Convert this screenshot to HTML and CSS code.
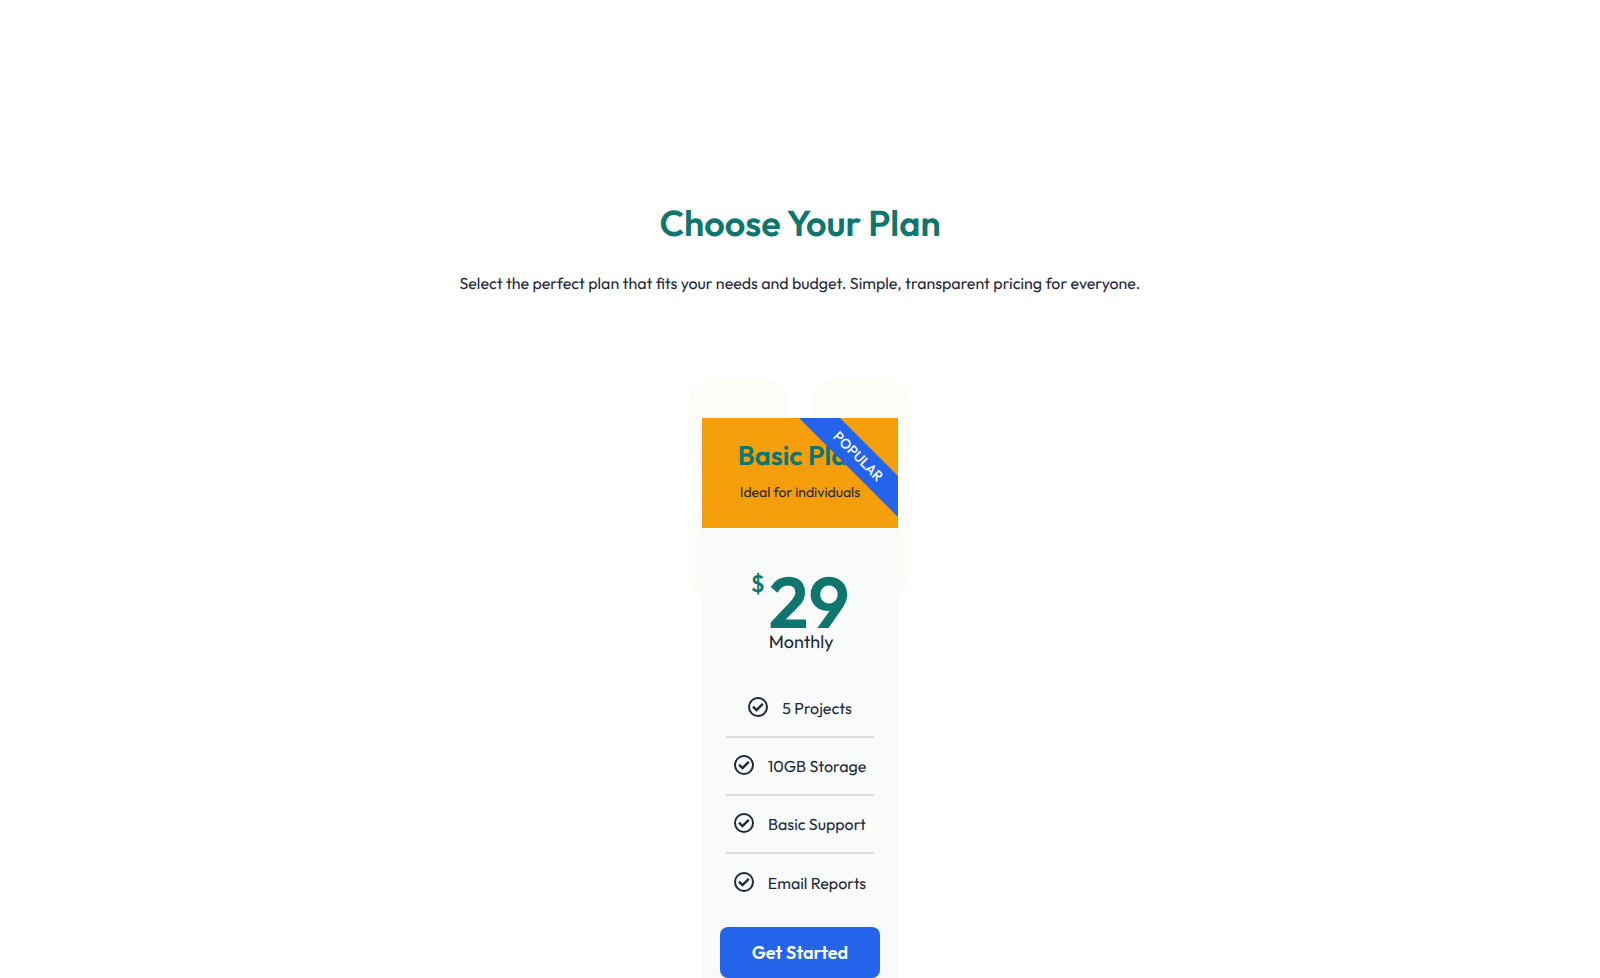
FILE: index.html
```html
<!DOCTYPE html>
<html lang="en">
<head>
<meta charset="utf-8">
<meta name="viewport" content="width=device-width, initial-scale=1">
<title>Choose Your Plan</title>
<link rel="stylesheet" href="styles.css">
</head>
<body>
<svg class="sprite" aria-hidden="true">
  <symbol id="check" viewBox="0 0 20 20">
    <circle cx="10" cy="10" r="9" fill="none" stroke="currentColor" stroke-width="2"/>
    <path d="M5 9.6 8.5 13 14.8 6.8" fill="none" stroke="currentColor" stroke-width="2.4"/>
  </symbol>
</svg>
<main class="pricing">
  <h1 class="title">Choose Your Plan</h1>
  <p class="intro">Select the perfect plan that fits your needs and budget. Simple, transparent pricing for everyone.</p>
  <div class="plans">
    <div class="backdrop" aria-hidden="true"><i class="tile"></i><i class="tile"></i><i class="tile"></i><i class="tile"></i></div>
    <article class="card">
      <header class="card-head">
        <h2 class="plan-name">Basic Plan</h2>
        <p class="plan-note">Ideal for individuals</p>
        <span class="ribbon">POPULAR</span>
      </header>
      <div class="card-body">
        <div class="price">
          <span class="currency">$</span>
          <div class="price-main">
            <span class="amount">29</span>
            <span class="period">Monthly</span>
          </div>
        </div>
        <ul class="features">
          <li class="feature"><svg class="icon"><use href="#check"/></svg><span>5 Projects</span></li>
          <li class="feature"><svg class="icon"><use href="#check"/></svg><span>10GB Storage</span></li>
          <li class="feature"><svg class="icon"><use href="#check"/></svg><span>Basic Support</span></li>
          <li class="feature"><svg class="icon"><use href="#check"/></svg><span>Email Reports</span></li>
        </ul>
        <button class="cta" type="button">Get Started</button>
      </div>
    </article>
  </div>
</main>
</body>
</html>
```
FILE: styles.css
```css
* { box-sizing: border-box; }
body {
  margin: 0;
  background: #fff;
  color: #1e293b;
  font-family: Outfit, Lato, sans-serif;
  font-size: 16px;
  font-weight: 400;
  line-height: 24px;
  text-rendering: geometricPrecision;
  overflow: hidden;
}
h1, h2, p, ul { margin: 0; padding: 0; }
.sprite { display: none; }
.pricing {
  display: flex;
  flex-direction: column;
  align-items: center;
  padding: 201px 24px 0;
  text-align: center;
}
.title {
  color: #0f766e;
  font-size: 36px;
  line-height: 46px;
  font-weight: 600;
}
.intro { margin-top: 25px; }
.plans {
  position: relative;
  margin-top: 82px;
  padding: 40px 13px 0;
}
.backdrop {
  position: absolute;
  inset: 0 0 auto;
  display: grid;
  grid-template-columns: 100px 100px;
  grid-auto-rows: 100px;
  justify-content: space-between;
  row-gap: 22px;
}
.tile { background: #fefcf6; border-radius: 24px; }
.card { position: relative; width: 196px; background: #f9fbfa; }
.card-head {
  position: relative;
  overflow: hidden;
  padding: 22px 0 24px;
  background: #f59e0b;
}
.plan-name {
  color: #0f766e;
  font-size: 27px;
  line-height: 32px;
  font-weight: 600;
}
.plan-note { margin-top: 8px; font-size: 14px; }
.ribbon {
  position: absolute;
  top: 24px;
  right: -35px;
  width: 150px;
  background: #2563eb;
  color: #fff;
  font-size: 14px;
  line-height: 29px;
  font-weight: 500;
  transform: rotate(45deg);
}
.card-body { padding: 42px 18px 24px; }
.price {
  display: flex;
  justify-content: center;
  gap: 4px;
  color: #0f766e;
}
.currency { font-size: 24px; line-height: 28px; font-weight: 500; }
.price-main { display: flex; flex-direction: column; align-items: flex-start; }
.amount { font-size: 72px; line-height: 64px; font-weight: 600; }
.period { color: #1e293b; font-size: 18px; line-height: 16px; }
.features {
  list-style: none;
  margin: 30px 6px 0;
}
.feature {
  display: flex;
  align-items: center;
  justify-content: center;
  gap: 14px;
  height: 58px;
  padding-top: 2px;
  border-bottom: 2px solid #ddd;
  white-space: nowrap;
}
.feature:last-child { border-bottom: 0; }
.icon { width: 20px; height: 20px; flex: none; margin-bottom: 4px; }
.cta {
  width: 100%;
  height: 51px;
  margin-top: 15px;
  border: 0;
  border-radius: 8px;
  background: #2563eb;
  color: #fff;
  font: inherit;
  font-size: 18px;
  font-weight: 600;
}
```
